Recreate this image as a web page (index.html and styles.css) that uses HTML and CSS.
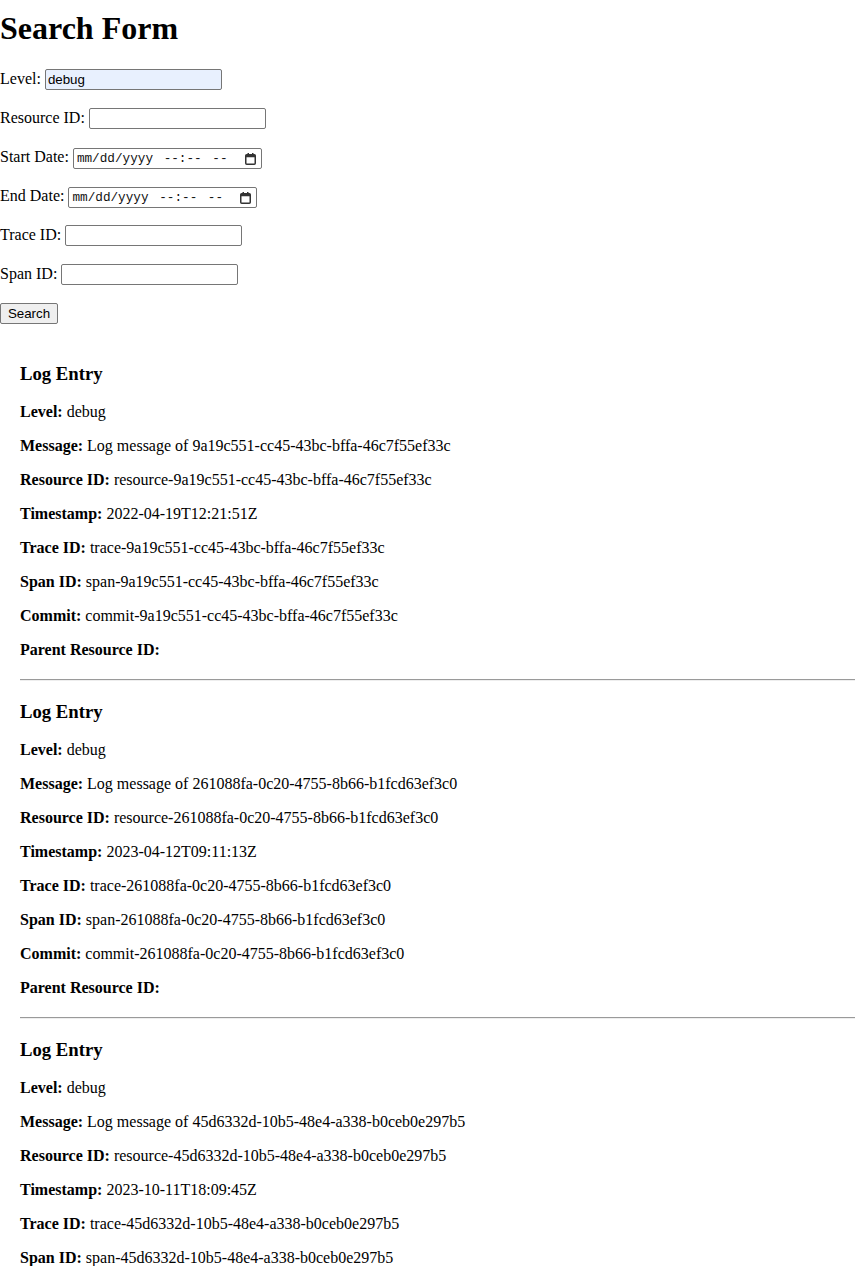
FILE: index.html
```html
<!DOCTYPE html>
<html>
<head>
<meta charset="utf-8">
<title>Search Form</title>
<link rel="stylesheet" href="styles.css">
</head>
<body>
<h1 class="title">Search Form</h1>
<form class="search-form">
  <p class="row"><label>Level: <input class="text-input level" type="text" value="debug"></label></p>
  <p class="row"><label>Resource ID: <input class="text-input" type="text"></label></p>
  <p class="row"><label>Start Date: <span class="date-input"><span class="date-text">mm/dd/yyyy --:-- --</span><svg class="cal-icon" width="11" height="12" viewBox="0 0 11 12"><rect x="0.75" y="1.75" width="9.5" height="9.5" rx="1" fill="none" stroke="#333" stroke-width="1.5"/><rect x="0.75" y="1.75" width="9.5" height="2.5" fill="#333"/><rect x="2.5" y="0" width="1.5" height="2" fill="#333"/><rect x="7" y="0" width="1.5" height="2" fill="#333"/></svg></span></label></p>
  <p class="row"><label>End Date: <span class="date-input"><span class="date-text">mm/dd/yyyy --:-- --</span><svg class="cal-icon" width="11" height="12" viewBox="0 0 11 12"><rect x="0.75" y="1.75" width="9.5" height="9.5" rx="1" fill="none" stroke="#333" stroke-width="1.5"/><rect x="0.75" y="1.75" width="9.5" height="2.5" fill="#333"/><rect x="2.5" y="0" width="1.5" height="2" fill="#333"/><rect x="7" y="0" width="1.5" height="2" fill="#333"/></svg></span></label></p>
  <p class="row"><label>Trace ID: <input class="text-input" type="text"></label></p>
  <p class="row"><label>Span ID: <input class="text-input" type="text"></label></p>
  <p class="row"><button class="search-btn" type="button">Search</button></p>
</form>
<div class="logs">
  <div class="entry">
    <h3 class="entry-title">Log Entry</h3>
    <p class="field"><strong>Level:</strong> debug</p>
    <p class="field"><strong>Message:</strong> Log message of 9a19c551-cc45-43bc-bffa-46c7f55ef33c</p>
    <p class="field"><strong>Resource ID:</strong> resource-9a19c551-cc45-43bc-bffa-46c7f55ef33c</p>
    <p class="field"><strong>Timestamp:</strong> 2022-04-19T12:21:51Z</p>
    <p class="field"><strong>Trace ID:</strong> trace-9a19c551-cc45-43bc-bffa-46c7f55ef33c</p>
    <p class="field"><strong>Span ID:</strong> span-9a19c551-cc45-43bc-bffa-46c7f55ef33c</p>
    <p class="field"><strong>Commit:</strong> commit-9a19c551-cc45-43bc-bffa-46c7f55ef33c</p>
    <p class="field"><strong>Parent Resource ID:</strong> </p>
    <hr class="sep">
  </div>
  <div class="entry">
    <h3 class="entry-title">Log Entry</h3>
    <p class="field"><strong>Level:</strong> debug</p>
    <p class="field"><strong>Message:</strong> Log message of 261088fa-0c20-4755-8b66-b1fcd63ef3c0</p>
    <p class="field"><strong>Resource ID:</strong> resource-261088fa-0c20-4755-8b66-b1fcd63ef3c0</p>
    <p class="field"><strong>Timestamp:</strong> 2023-04-12T09:11:13Z</p>
    <p class="field"><strong>Trace ID:</strong> trace-261088fa-0c20-4755-8b66-b1fcd63ef3c0</p>
    <p class="field"><strong>Span ID:</strong> span-261088fa-0c20-4755-8b66-b1fcd63ef3c0</p>
    <p class="field"><strong>Commit:</strong> commit-261088fa-0c20-4755-8b66-b1fcd63ef3c0</p>
    <p class="field"><strong>Parent Resource ID:</strong> </p>
    <hr class="sep">
  </div>
  <div class="entry">
    <h3 class="entry-title">Log Entry</h3>
    <p class="field"><strong>Level:</strong> debug</p>
    <p class="field"><strong>Message:</strong> Log message of 45d6332d-10b5-48e4-a338-b0ceb0e297b5</p>
    <p class="field"><strong>Resource ID:</strong> resource-45d6332d-10b5-48e4-a338-b0ceb0e297b5</p>
    <p class="field"><strong>Timestamp:</strong> 2023-10-11T18:09:45Z</p>
    <p class="field"><strong>Trace ID:</strong> trace-45d6332d-10b5-48e4-a338-b0ceb0e297b5</p>
    <p class="field"><strong>Span ID:</strong> span-45d6332d-10b5-48e4-a338-b0ceb0e297b5</p>
    <p class="field"><strong>Commit:</strong> commit-45d6332d-10b5-48e4-a338-b0ceb0e297b5</p>
    <p class="field"><strong>Parent Resource ID:</strong> </p>
    <hr class="sep">
  </div>
</div>
</body>
</html>
```
FILE: styles.css
```css
html, body {
  margin: 0;
  padding: 0;
  background: #fff;
  color: #000;
  font-family: "Liberation Serif", "Times New Roman", serif;
  font-size: 16px;
}

.title {
  font-size: 32px;
  font-weight: bold;
  margin: 10px 0 21.44px;
}

.search-form {
  margin: 0;
}

.row {
  box-sizing: border-box;
  margin: 16px 0;
  height: 23px;
  line-height: 21px;
}

.text-input {
  box-sizing: border-box;
  width: 177px;
  height: 21px;
  padding: 1px 2px;
  border: 1px solid #767676;
  border-radius: 2px;
  font-family: "Liberation Sans", Arial, sans-serif;
  font-size: 13.333px;
  background: #fff;
  color: #000;
  vertical-align: baseline;
}

.text-input.level {
  background: #e8f0fe;
}

.date-input {
  box-sizing: border-box;
  display: inline-flex;
  align-items: baseline;
  justify-content: space-between;
  width: 189px;
  height: 21px;
  padding: 0 5px 0 3px;
  border: 1px solid #767676;
  border-radius: 2px;
  background: #fff;
  vertical-align: baseline;
}

.date-text {
  font-family: "Liberation Mono", "DejaVu Sans Mono", monospace;
  font-size: 12.7px;
  word-spacing: 3px;
  line-height: 19px;
  color: #111;
  white-space: pre;
}

.cal-icon {
  display: block;
  flex: none;
  align-self: center;
}

.search-btn {
  box-sizing: border-box;
  width: 58px;
  height: 21px;
  padding: 1px 6px;
  border: 1px solid #767676;
  border-radius: 2px;
  background: #efefef;
  font-family: "Liberation Sans", Arial, sans-serif;
  font-size: 13.333px;
  color: #000;
}

.logs {
  margin-left: 20px;
  padding-top: 22px;
}

.entry-title {
  font-size: 18.72px;
  font-weight: bold;
  margin: 0 0 18px;
}

.field {
  margin: 16px 0;
}

.sep {
  margin: 20px 0;
  border: 0;
  border-top: 1px solid #9a9a9a;
  border-bottom: 1px solid #eeeeee;
  height: 0;
}
```
